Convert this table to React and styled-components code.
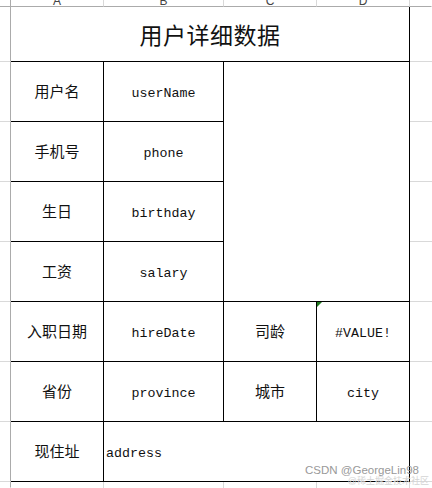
import React from 'react';
import styled, { createGlobalStyle } from 'styled-components';

const GlobalStyle = createGlobalStyle`
    html, body {
        margin: 0;
        padding: 0;
        background: #fff;
    }
    * {
        box-sizing: border-box;
    }
`;

const gridGray = '#d9d9d9';
const headGray = '#ababab';

const Sheet = styled.div`
    position: relative;
    width: 432px;
    height: 488px;
    overflow: hidden;
    display: grid;
    grid-template-columns: 11px 93px 120px 93px 93px 1fr;
    grid-template-rows: 7px 55px repeat(7, 60px) 1fr;
    background: #fff;
`;

const ColHead = styled.div`
    border-bottom: 1px solid ${headGray};
    border-right: 1px solid ${(p) => (p.$last ? 'transparent' : gridGray)};
    overflow: hidden;
    display: flex;
    align-items: flex-end;
    justify-content: center;
    font-family: "Liberation Sans", Arial, sans-serif;
    font-size: 12px;
    color: #444;
    span {
        line-height: 14px;
        margin-bottom: -2px;
    }
`;

const Corner = styled.div`
    border-bottom: 1px solid ${headGray};
    border-right: 1px solid ${headGray};
`;

const LeftGutter = styled.div`
    grid-column: 1;
    border-right: 1px solid ${headGray};
    border-bottom: 1px solid ${(p) => (p.$open ? 'transparent' : gridGray)};
`;

const RightGutter = styled.div`
    grid-column: 6;
    border-bottom: 1px solid ${(p) => (p.$open ? 'transparent' : gridGray)};
`;

const Title = styled.div`
    grid-column: 2 / 6;
    border-right: 1px solid #000;
    border-bottom: 1px solid #000;
    display: flex;
    align-items: center;
    justify-content: center;
    padding-bottom: 1px;
    font-family: "Noto Sans CJK SC", sans-serif;
    font-size: 23px;
    color: #111;
    letter-spacing: 0.5px;
`;

const Cell = styled.div`
    position: relative;
    border-right: 1px solid #000;
    border-bottom: 1px solid #000;
    display: flex;
    align-items: center;
    justify-content: ${(p) => (p.$left ? 'flex-start' : 'center')};
    padding-left: ${(p) => (p.$left ? '2px' : '0')};
    padding-top: ${(p) => (p.$mono ? '3px' : '0')};
    padding-bottom: ${(p) => (p.$mono ? '0' : '2px')};
    font-family: ${(p) =>
        p.$mono
            ? '"Liberation Mono", "Courier New", monospace'
            : '"Noto Sans CJK SC", sans-serif'};
    font-size: ${(p) => (p.$mono ? '13.3px' : '15px')};
    color: #111;
    grid-column: ${(p) => p.$col || 'auto'};
    grid-row: ${(p) => p.$row || 'auto'};
`;

const Flag = styled.span`
    position: absolute;
    left: 0;
    top: 0;
    width: 0;
    height: 0;
    border-top: 5px solid #1f7a1f;
    border-right: 5px solid transparent;
`;

const Foot = styled.div`
    border-right: 1px solid ${(p) => (p.$last ? 'transparent' : gridGray)};
`;

const Watermark = styled.div`
    position: absolute;
    right: 3px;
    bottom: 2px;
    display: flex;
    flex-direction: column;
    align-items: flex-end;
    font-family: "Liberation Sans", Arial, "Noto Sans CJK SC", sans-serif;
    pointer-events: none;
`;

const MarkMain = styled.span`
    font-size: 11.5px;
    line-height: 12px;
    color: #999;
    margin-right: 10px;
`;

const MarkSub = styled.span`
    font-size: 9px;
    line-height: 10px;
    color: #d4d4d4;
`;

const rows = [
    { label: '用户名', value: 'userName' },
    { label: '手机号', value: 'phone' },
    { label: '生日', value: 'birthday' },
    { label: '工资', value: 'salary' },
];

export default function App() {
    return (
        <>
            <GlobalStyle />
            <Sheet>
                <Corner />
                {['A', 'B', 'C', 'D'].map((c) => (
                    <ColHead key={c}>
                        <span>{c}</span>
                    </ColHead>
                ))}
                <ColHead $last />

                <LeftGutter style={{ gridRow: 2 }} />
                <Title>用户详细数据</Title>
                <RightGutter style={{ gridRow: 2 }} />

                {rows.map((r, i) => (
                    <React.Fragment key={r.value}>
                        <LeftGutter style={{ gridRow: i + 3 }} />
                        <Cell $col="2" $row={i + 3}>{r.label}</Cell>
                        <Cell $col="3" $row={i + 3} $mono>{r.value}</Cell>
                        <RightGutter style={{ gridRow: i + 3 }} />
                    </React.Fragment>
                ))}
                <Cell $col="4 / 6" $row="3 / 7" />

                <LeftGutter style={{ gridRow: 7 }} />
                <Cell $col="2" $row="7">入职日期</Cell>
                <Cell $col="3" $row="7" $mono>hireDate</Cell>
                <Cell $col="4" $row="7">司龄</Cell>
                <Cell $col="5" $row="7" $mono>
                    <Flag />
                    #VALUE!
                </Cell>
                <RightGutter style={{ gridRow: 7 }} />

                <LeftGutter style={{ gridRow: 8 }} />
                <Cell $col="2" $row="8">省份</Cell>
                <Cell $col="3" $row="8" $mono>province</Cell>
                <Cell $col="4" $row="8">城市</Cell>
                <Cell $col="5" $row="8" $mono>city</Cell>
                <RightGutter style={{ gridRow: 8 }} />

                <LeftGutter style={{ gridRow: 9 }} />
                <Cell $col="2" $row="9">现住址</Cell>
                <Cell $col="3 / 6" $row="9" $mono $left>address</Cell>
                <RightGutter style={{ gridRow: 9 }} />

                <LeftGutter $open style={{ gridRow: 10 }} />
                <Foot />
                <Foot />
                <Foot />
                <Foot />
                <Foot $last />

                <Watermark>
                    <MarkMain>CSDN @GeorgeLin98</MarkMain>
                    <MarkSub>@稀土掘金技术社区</MarkSub>
                </Watermark>
            </Sheet>
        </>
    );
}
